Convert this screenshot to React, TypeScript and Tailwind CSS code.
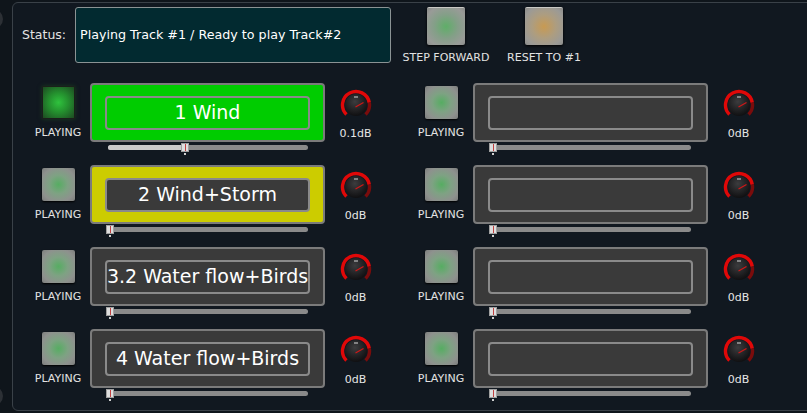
import React from 'react'

type Track = {
  name: string
  tone: 'green' | 'yellow' | 'gray'
  level: string
  pos: number
  lit?: boolean
}

const left: Track[] = [
  { name: '1 Wind', tone: 'green', level: '0.1dB', pos: 73, lit: true },
  { name: '2 Wind+Storm', tone: 'yellow', level: '0dB', pos: -2 },
  { name: '3.2 Water flow+Birds', tone: 'gray', level: '0dB', pos: -2 },
  { name: '4 Water flow+Birds', tone: 'gray', level: '0dB', pos: -2 },
]

const right: Track[] = [0, 1, 2, 3].map(() => ({ name: '', tone: 'gray', level: '0dB', pos: -2 }))

function Knob() {
  return (
    <svg width="32" height="32" viewBox="0 0 32 32">
      <defs>
        <radialGradient id="kb" cx="45%" cy="35%" r="70%">
          <stop offset="0%" stopColor="#3c3c3e" />
          <stop offset="100%" stopColor="#0c0c0e" />
        </radialGradient>
      </defs>
      <path d="M 6.45 25.55 A 13.5 13.5 0 1 1 29.29 13.66" fill="none" stroke="#e00808" strokeWidth="3.4" />
      <path d="M 29.29 13.66 A 13.5 13.5 0 0 1 25.55 25.55" fill="none" stroke="#7a0c0c" strokeWidth="3.4" />
      <circle cx="16" cy="16" r="11" fill="url(#kb)" />
      <line x1="14" y1="8" x2="18" y2="8" stroke="#d8d8d8" strokeWidth="1" />
      <line x1="15.5" y1="18" x2="23.5" y2="13.5" stroke="#d01818" strokeWidth="1.2" />
    </svg>
  )
}

function Led({ lit }: { lit?: boolean }) {
  if (lit) {
    return (
      <div className="w-[33px] h-[33px] border border-[#1a1f1a] bg-[radial-gradient(circle,#2fc23d_0%,#24902e_45%,#1d4a22_100%)] shadow-[0_0_4px_#1a3a1e]" />
    )
  }
  return (
    <div className="w-[33px] h-[33px] rounded-[2px] bg-[radial-gradient(circle,#56ad62_0%,#7ea283_40%,#8e918e_75%,#7c7d7c_100%)] shadow-[0_1px_2px_#000]" />
  )
}

function Slider({ pos }: { pos: number }) {
  return (
    <div className="relative mt-[3px] ml-[18px] w-[200px] h-[5px] rounded-full bg-[#8a8a8a]">
      <div className="h-full rounded-l-full bg-[#cacaca]" style={{ width: Math.max(pos + 3, 0) }} />
      <div
        className="absolute top-[-2px] w-[8px] h-[9px] bg-[#dedede] border border-[#a0a0a0] flex justify-center"
        style={{ left: pos }}
      >
        <div className="w-[1px] h-full bg-[#c04040]" />
      </div>
      <div className="absolute top-[8px] w-[2px] h-[2px] bg-[#cfcfcf]" style={{ left: pos + 3 }} />
    </div>
  )
}

function Cell({ t }: { t: Track }) {
  const outer =
    t.tone === 'green'
      ? 'bg-[#00cc00]'
      : t.tone === 'yellow'
        ? 'bg-[#cccc00]'
        : 'bg-[#3a3a3a]'
  const inner = t.tone === 'green' ? 'bg-[#00cc00]' : 'bg-[#3a3a3a]'
  return (
    <div className="flex items-start">
      <div className="w-[50px] pt-[3px] flex flex-col items-center">
        <Led lit={t.lit} />
        <div className="mt-[8px] text-[11px] leading-[12px] text-[#e2e2e2]">PLAYING</div>
      </div>
      <div className="ml-[7px] w-[235px]">
        <div className={`h-[59px] rounded-[4px] border-2 border-[#7b7b7b] flex items-center justify-center ${outer}`}>
          <div
            className={`w-[205px] h-[34px] rounded-[4px] border-2 border-[#8a8a8a] flex items-center justify-center text-[19px] text-white whitespace-nowrap ${inner}`}
          >
            {t.name}
          </div>
        </div>
        <Slider pos={t.pos} />
      </div>
      <div className="ml-[10px] w-[41px] pt-[6px] flex flex-col items-center">
        <Knob />
        <div className="mt-[7px] text-[11px] leading-[12px] text-[#e6e6e6]">{t.level}</div>
      </div>
    </div>
  )
}

function PushButton({ label, glow }: { label: string; glow: 'green' | 'orange' }) {
  const bg =
    glow === 'green'
      ? 'bg-[radial-gradient(circle,#5fae68_0%,#849f88_45%,#999b98_80%,#8a8b8a_100%)]'
      : 'bg-[radial-gradient(circle,#c89a52_0%,#ad9d80_45%,#9b9a96_80%,#8b8b89_100%)]'
  return (
    <div className="w-[90px] flex flex-col items-center">
      <div className={`w-[38px] h-[38px] rounded-[2px] border-t border-[#c8c8c4] shadow-[0_1px_3px_#000] ${bg}`} />
      <div className="mt-[7px] text-[11px] leading-[12px] text-[#e2e2e2] whitespace-nowrap">{label}</div>
    </div>
  )
}

export default function App() {
  return (
    <div className="w-[807px] h-[413px] overflow-hidden bg-[#0f151b] flex font-['DejaVu_Sans',sans-serif]">
      <div className="w-[12px] shrink-0 flex flex-col justify-between pt-[9px] pb-[7px]">
        <div className="w-[20px] h-[20px] -ml-[17px] rounded-full bg-[#2c3035]" />
        <div className="w-[20px] h-[20px] -ml-[17px] rounded-full bg-[#2c3035]" />
      </div>
      <div className="mt-[2px] w-[820px] h-[409px] shrink-0 rounded-[6px] border border-[#3a4148] bg-[#111820]">
        <div className="flex items-start pt-[4px]">
          <div className="w-[62px] pl-[9px] h-[56px] flex items-center text-[12.5px] text-[#e4e4e4]">Status:</div>
          <div className="w-[316px] h-[56px] rounded-[3px] border border-[#8b9394] bg-[#022a30] flex items-center pl-[4px] text-[12.7px] text-white">
            Playing Track #1 / Ready to play Track#2
          </div>
          <div className="ml-[10px] flex gap-[8px]">
            <PushButton label="STEP FORWARD" glow="green" />
            <PushButton label="RESET TO #1" glow="orange" />
          </div>
        </div>
        <div className="mt-[19px] pl-[20px] grid grid-cols-[383px_383px] gap-y-[15px]">
          {left.map((t, i) => (
            <React.Fragment key={i}>
              <Cell t={t} />
              <Cell t={right[i]} />
            </React.Fragment>
          ))}
        </div>
      </div>
    </div>
  )
}
